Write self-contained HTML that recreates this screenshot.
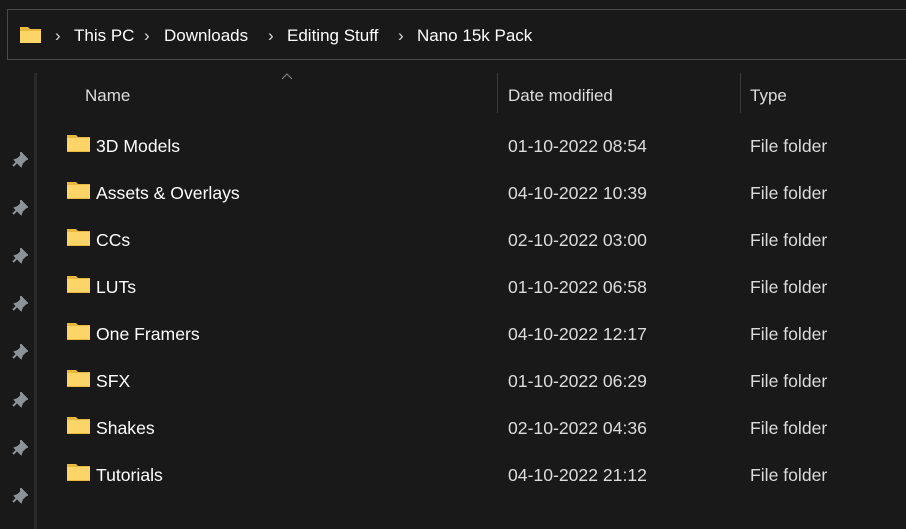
<!DOCTYPE html>
<html><head><style>
body{margin:0;width:906px;height:529px;background:#191919;overflow:hidden;font-family:"Liberation Sans",sans-serif;color:#fff;position:relative}
.abs{position:absolute}
.addr{left:7px;top:9px;width:920px;height:51px;border:1px solid #4a4a4a;box-sizing:border-box}
.t{position:absolute;font-size:17px;white-space:nowrap;line-height:20px}
.r{font-size:17.6px}
.sep{position:absolute;top:73px;width:1px;height:40px;background:#3c3c3c}
.dt{color:#dcdcdc}
</style></head><body>
<div class="abs addr"></div>
<svg class="abs" style="left:19px;top:25px" width="24" height="20"><path d="M1 2h8l2 2h11v14H1z" fill="#e8b93a"/><path d="M1 6h21v12H1z" fill="#fdd467"/></svg>
<div class="t" style="left:55px;top:26px;color:#ddd">›</div>
<div class="t" style="left:74px;top:26px">This PC</div>
<div class="t" style="left:144px;top:26px;color:#ddd">›</div>
<div class="t" style="left:164px;top:26px">Downloads</div>
<div class="t" style="left:268px;top:26px;color:#ddd">›</div>
<div class="t" style="left:287px;top:26px">Editing Stuff</div>
<div class="t" style="left:398px;top:26px;color:#ddd">›</div>
<div class="t" style="left:417px;top:26px">Nano 15k Pack</div>
<div class="abs" style="left:34px;top:73px;width:3px;height:456px;background:#2a2a2a"></div>
<svg class="abs" style="left:281px;top:72px" width="12" height="8"><path d="M1 7l5-5 5 5" stroke="#888" fill="none"/></svg>
<div class="t" style="left:85px;top:86px;color:#ddd">Name</div>
<div class="sep" style="left:497px"></div>
<div class="t" style="left:508px;top:86px;color:#ddd">Date modified</div>
<div class="sep" style="left:740px"></div>
<div class="t" style="left:750px;top:86px;color:#ddd">Type</div>
<div id="rows"></div>
<script>
var d=[["3D Models","01-10-2022 08:54"],["Assets &amp; Overlays","04-10-2022 10:39"],["CCs","02-10-2022 03:00"],["LUTs","01-10-2022 06:58"],["One Framers","04-10-2022 12:17"],["SFX","01-10-2022 06:29"],["Shakes","02-10-2022 04:36"],["Tutorials","04-10-2022 21:12"]];
var h="";d.forEach(function(r,i){var y=136+i*47;
h+='<svg class="abs" style="left:67px;top:'+(y-2)+'px" width="23" height="18"><path d="M0 1h9l2 2h12v15H0z" fill="#e8b93a"/><path d="M0 4h23v13H0z" fill="#fdd467"/></svg>';
h+='<div class="t r" style="left:96px;top:'+y+'px">'+r[0]+'</div><div class="t r dt" style="left:508px;top:'+y+'px">'+r[1]+'</div><div class="t r dt" style="left:750px;top:'+y+'px">File folder</div>';
var py=152+i*48;
h+='<svg class="abs" style="left:12px;top:'+py+'px" width="16" height="16"><path d="M9 1l6 6-2 1-3 3-1 3-6-6 3-1 3-3z M5 10l-4 4" stroke="#8b9399" stroke-width="2" fill="#8b9399"/></svg>';});
document.getElementById("rows").innerHTML=h;
</script>
</body></html>
